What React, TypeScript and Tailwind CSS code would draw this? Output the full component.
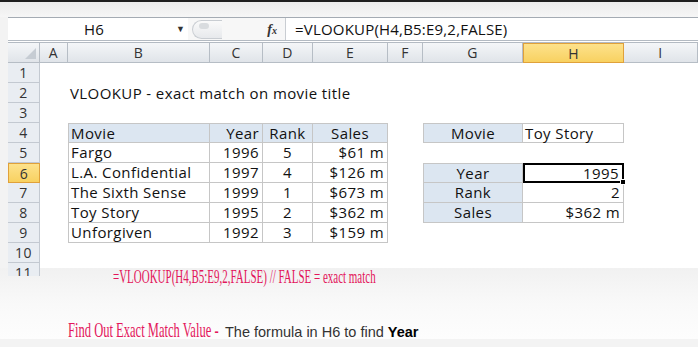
import React from "react";

const COLS = ["A", "B", "C", "D", "E", "F", "G", "H", "I"];

const MOVIES = [
  ["Movie", "Year", "Rank", "Sales"],
  ["Fargo", "1996", "5", "$61 m"],
  ["L.A. Confidential", "1997", "4", "$126 m"],
  ["The Sixth Sense", "1999", "1", "$673 m"],
  ["Toy Story", "1995", "2", "$362 m"],
  ["Unforgiven", "1992", "3", "$159 m"],
];

const LOOKUP: Record<number, [string, string]> = {
  4: ["Movie", "Toy Story"],
  6: ["Year", "1995"],
  7: ["Rank", "2"],
  8: ["Sales", "$362 m"],
};

type Cell = { text?: string; align?: "left" | "center" | "right"; head?: boolean; boxed?: boolean; top?: boolean; first?: boolean; selected?: boolean; spill?: boolean };

function getCell(row: number, col: number): Cell {
  if (row === 2 && col === 1) return { text: "VLOOKUP - exact match on movie title", spill: true };
  if (row >= 4 && row <= 9 && col >= 1 && col <= 4) {
    const text = MOVIES[row - 4][col - 1];
    const align = col === 1 ? "left" : col === 2 ? "right" : row === 4 || col === 3 ? "center" : "right";
    return { text, align, head: row === 4, boxed: true, top: row === 4, first: col === 1 };
  }
  const lookup = LOOKUP[row];
  if (lookup && (col === 6 || col === 7)) {
    if (col === 6) return { text: lookup[0], align: "center", head: true, boxed: true, top: row === 4 || row === 6, first: true };
    return { text: lookup[1], align: row === 4 ? "left" : "right", boxed: true, top: row === 4 || row === 6, selected: row === 6 };
  }
  return {};
}

function SheetCell({ cell }: { cell: Cell }) {
  const justify = cell.align === "center" ? "justify-center" : cell.align === "right" ? "justify-end pr-[3px]" : "justify-start pl-[2px]";
  if (cell.selected) {
    return (
      <div className={`relative z-10 flex items-center border-2 border-black bg-white ${justify}`}>
        {cell.text}
        <span className="absolute -bottom-[4px] -right-[4px] h-[6px] w-[6px] border border-white bg-black" />
      </div>
    );
  }
  if (!cell.boxed) {
    // empty / free cells stay transparent so row 2's title can spill across
    return <div className={`flex items-center ${justify} ${cell.spill ? "overflow-visible whitespace-nowrap" : ""}`}>{cell.text}</div>;
  }
  return (
    <div
      className={`flex items-center whitespace-nowrap border-b border-r border-[#c6c6c6] ${cell.head ? "bg-[#dce6f1]" : "bg-white"} ${cell.top ? "border-t" : ""} ${cell.first ? "border-l" : ""} ${justify}`}
    >
      {cell.text}
    </div>
  );
}

export default function App() {
  const rows = Array.from({ length: 11 }, (_, i) => i + 1);

  return (
    <div className="h-[347px] w-[698px] overflow-hidden bg-[#f3f3f3] font-['Open_Sans',sans-serif] text-[15px] tracking-[0.4px] text-[#111]">
      <div className="h-[2px] bg-[#1e1e1e]" />
      <div className="h-[15px] bg-gradient-to-b from-[#ebebeb] to-[#f6f6f6]" />

      <div className="ml-[8px] bg-white">
        {/* formula bar */}
        <div className="flex h-[23px] items-center border-t border-[#a4abb3] bg-white text-[15px] tracking-[0.2px]">
          <div className="flex h-full w-[180px] items-center">
            <span className="flex-1 pl-[4px] text-center">H6</span>
            <span className="pr-[3px] text-[9px] text-[#333]">▼</span>
          </div>
          <div className="flex h-full w-[97px] items-center bg-[#f7f7f7]">
            <span className="ml-[4px] h-[19px] w-[30px] rounded-l-full border border-r-0 border-[#c9cdd2] bg-gradient-to-b from-[#fafafa] to-[#e7e9ec] pl-[6px] pt-[2px]">
              <span className="block h-[6px] w-[10px] rounded-full bg-[#d9dcdf]" />
            </span>
            <span className="ml-auto mr-[8px] font-['Liberation_Serif',serif] text-[14px] font-bold italic tracking-normal text-[#333]">
              f<span className="text-[10px]">x</span>
            </span>
          </div>
          <div className="flex h-full flex-1 items-center border-l border-[#c9cdd2] pl-[9px]">=VLOOKUP(H4,B5:E9,2,FALSE)</div>
        </div>
        <div className="h-[3px] border-y border-[#b3bac2] bg-white" />

        {/* sheet */}
        <div className="h-[233px] overflow-hidden">
          <div className="grid grid-cols-[32px_28px_142px_53px_50px_75px_35px_100px_101px_1fr] auto-rows-[20px]">
            <div className="relative border-b border-r border-[#b6bdc5] bg-gradient-to-b from-[#f4f6f8] to-[#e0e4e9]">
              <span className="absolute bottom-[3px] right-[3px] h-0 w-0 border-b-[11px] border-l-[11px] border-b-[#c6ccd3] border-l-transparent" />
            </div>
            {COLS.map((c) =>
              c === "H" ? (
                <div key={c} className="flex items-center justify-center border border-[#e0a13a] bg-gradient-to-b from-[#fde28b] to-[#f8d160] text-[14px] text-[#333]">
                  {c}
                </div>
              ) : (
                <div key={c} className="flex items-center justify-center border-b border-r border-[#b6bdc5] bg-gradient-to-b from-[#f4f6f8] to-[#e0e4e9] text-[14px] text-[#333]">
                  {c}
                </div>
              )
            )}

            {rows.map((r) => (
              <React.Fragment key={r}>
                {r === 6 ? (
                  <div className="flex items-center justify-center border border-[#e0a13a] bg-gradient-to-b from-[#fde28b] to-[#f8d160] text-[14px] text-[#333]">{r}</div>
                ) : (
                  <div className="flex items-center justify-center border-b border-r border-[#c3c9d1] bg-[#e9edf2] text-[14px] text-[#333]">{r}</div>
                )}
                {COLS.map((c, ci) => (
                  <SheetCell key={c} cell={getCell(r, ci)} />
                ))}
              </React.Fragment>
            ))}
          </div>
        </div>
      </div>

      {/* caption area */}
      <div className="h-[71px] bg-gradient-to-b from-[#f1f1f1] via-[#f9f9f9] to-[#fdfdfd] tracking-normal">
        <div className="relative -mt-[8px] h-[18px] whitespace-nowrap pl-[113px] font-['Liberation_Serif',serif] text-[18px] leading-[18px] text-[#e3165b]">
          <span className="inline-block origin-left scale-x-[0.61]">=VLOOKUP(H4,B5:E9,2,FALSE) // FALSE = exact match</span>
        </div>
        <div className="mt-[32px] flex h-[24px] items-baseline whitespace-nowrap pl-[68px] leading-[24px]">
          <div className="w-[157px]">
            <span className="inline-block origin-left scale-x-[0.57] font-['Liberation_Serif',serif] text-[22px] text-[#e3165b]">Find Out Exact Match Value -</span>
          </div>
          <span className="font-['Liberation_Sans',sans-serif] text-[14.5px] text-[#333]">
            The formula in H6 to find <b className="text-black">Year</b>
          </span>
        </div>
      </div>
    </div>
  );
}
